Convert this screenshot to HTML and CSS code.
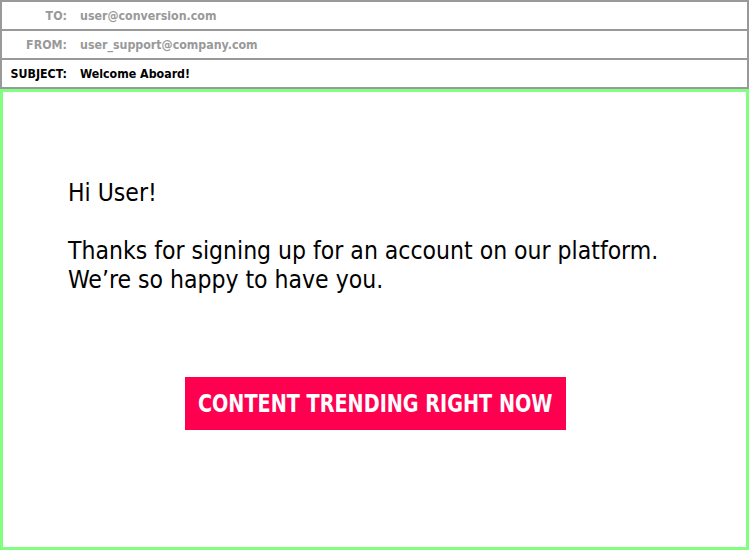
FILE: index.html
```html
<!DOCTYPE html>
<html>
<head>
<meta charset="utf-8">
<link rel="stylesheet" href="styles.css">
</head>
<body>
<div class="page">
  <div class="header">
    <div class="row muted"><span class="label">TO:</span><span class="value">user@conversion.com</span></div>
    <div class="row muted"><span class="label">FROM:</span><span class="value">user_support@company.com</span></div>
    <div class="row strong"><span class="label">SUBJECT:</span><span class="value">Welcome Aboard!</span></div>
  </div>
  <div class="content">
    <p class="greet">Hi User!</p>
    <p class="msg">Thanks for signing up for an account on our platform.<br>We’re so happy to have you.</p>
    <div class="cta-wrap"><a class="cta"><span class="cta-text">CONTENT TRENDING RIGHT NOW</span></a></div>
  </div>
</div>
</body>
</html>
```

FILE: styles.css
```css
html, body {
  margin: 0;
  padding: 0;
  background: #fff;
}
body {
  font-family: "DejaVu Sans Condensed", "DejaVu Sans", sans-serif;
}
.page {
  width: 749px;
  height: 550px;
  display: flex;
  flex-direction: column;
}
.header {
  border: 2px solid #999;
  border-bottom: none;
}
.row {
  height: 27px;
  border-bottom: 2px solid #999;
  display: flex;
  align-items: center;
  font-size: 12.3px;
  font-weight: bold;
}
.label {
  width: 65px;
  text-align: right;
  flex: none;
}
.value {
  margin-left: 13px;
}
.muted { color: #999; }
.strong { color: #000; }
.content {
  flex: 1;
  border: 3px solid #80ff80;
  padding: 0 65px;
  color: #000;
}
.greet {
  margin: 86px 0 0;
  font-size: 24.5px;
  line-height: 29px;
}
.msg {
  margin: 29px 0 0;
  font-size: 24.5px;
  line-height: 29px;
}
.cta-wrap {
  display: flex;
  justify-content: center;
  margin-top: 83px;
  margin-left: -64px;
  margin-right: -65px;
}
.cta {
  display: flex;
  justify-content: center;
  align-items: center;
  width: 381px;
  height: 53px;
  background: #ff0050;
  color: #fff;
  font-weight: bold;
  font-size: 24px;
  white-space: nowrap;
}
.cta-text {
  display: inline-block;
  flex: none;
  transform: scaleX(0.89);
}
```
